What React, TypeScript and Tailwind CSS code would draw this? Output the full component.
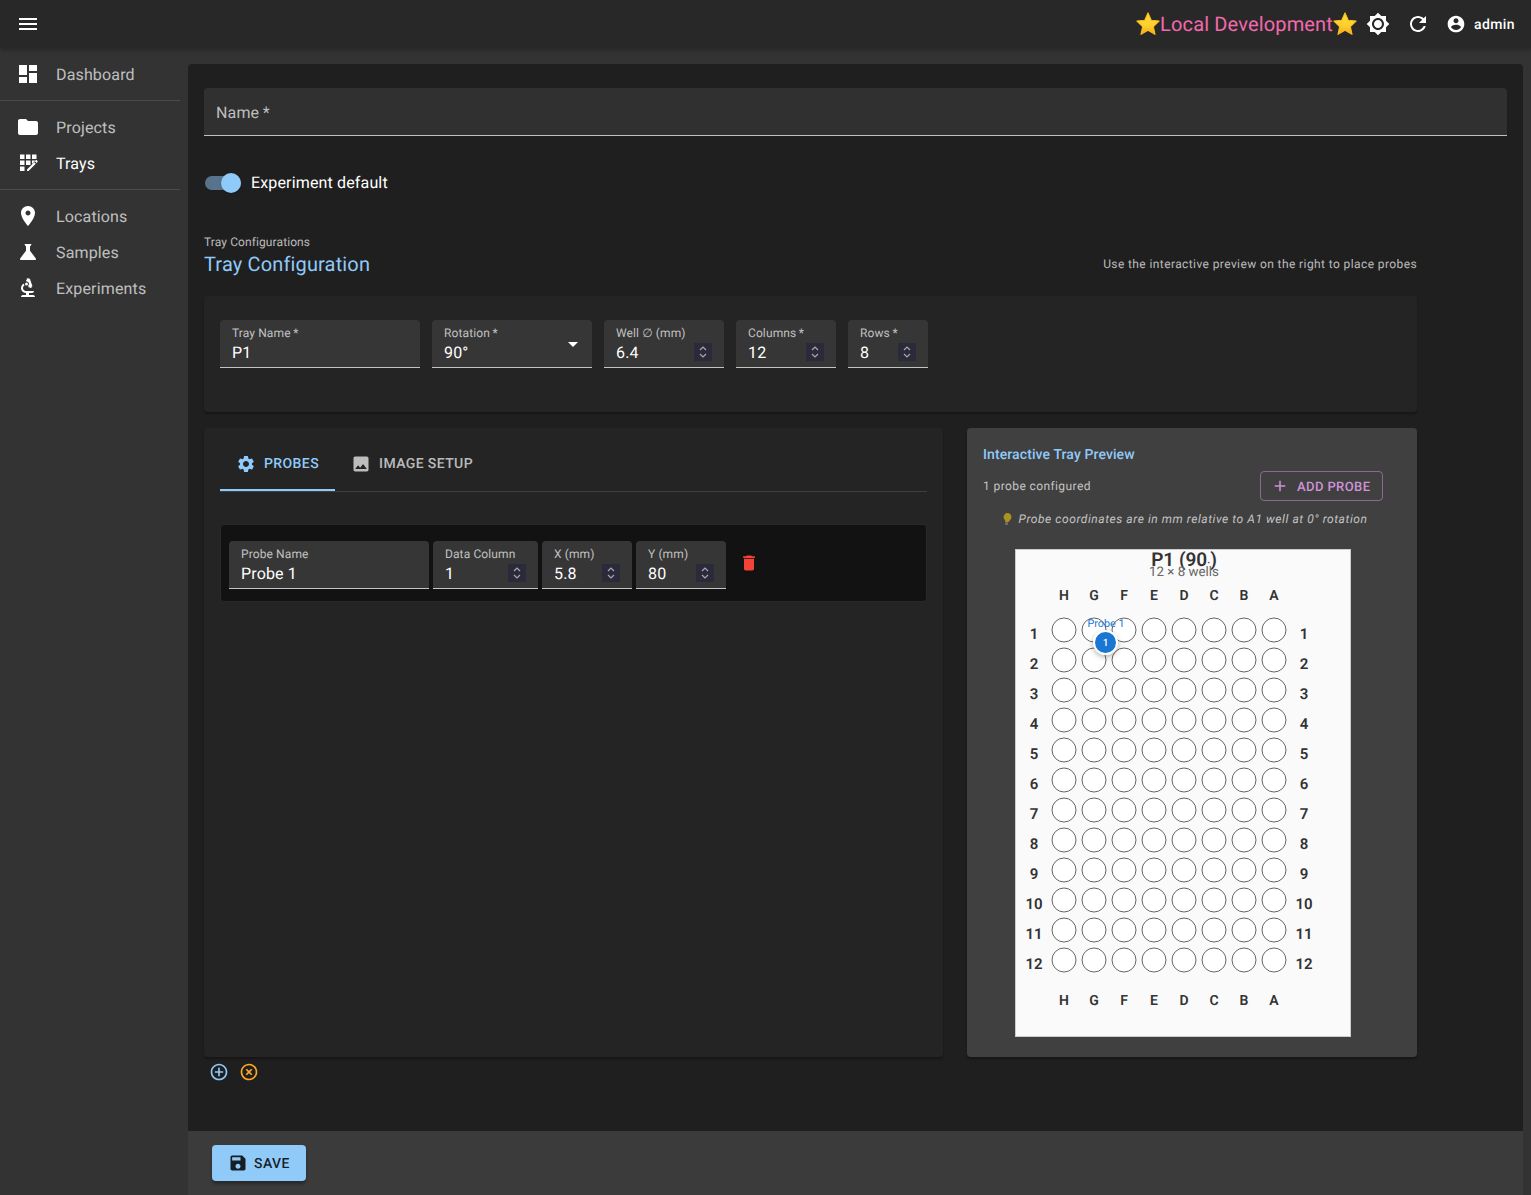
import React from "react";

const P = {
  menu: "M3 18h18v-2H3v2zm0-5h18v-2H3v2zm0-7v2h18V6H3z",
  dashboard: "M3 13h8V3H3v10zm0 8h8v-6H3v6zm10 0h8V11h-8v10zm0-18v6h8V3h-8z",
  folder: "M10 4H4c-1.1 0-1.99.9-1.99 2L2 18c0 1.1.9 2 2 2h16c1.1 0 2-.9 2-2V8c0-1.1-.9-2-2-2h-8l-2-2z",
  place: "M12 2C8.13 2 5 5.13 5 9c0 5.25 7 13 7 13s7-7.75 7-13c0-3.87-3.13-7-7-7zm0 9.5c-1.38 0-2.5-1.12-2.5-2.5s1.12-2.5 2.5-2.5 2.5 1.12 2.5 2.5-1.12 2.5-2.5 2.5z",
  science: "M19.8 18.4 14 10.67V6.5l1.35-1.69c.26-.33.03-.81-.39-.81H9.04c-.42 0-.65.48-.39.81L10 6.5v4.17L4.2 18.4c-.49.66-.02 1.6.8 1.6h14c.82 0 1.29-.94.8-1.6z",
  biotech: "M7 19c-1.1 0-2 .9-2 2h14c0-1.1-.9-2-2-2h-4v-2h3c1.1 0 2-.9 2-2h-8c-1.66 0-3-1.34-3-3 0-1.09.59-2.04 1.46-2.56C8.17 9.03 8 8.54 8 8c0-.21.04-.42.09-.62C6.28 8.13 5 9.92 5 12c0 2.76 2.24 5 5 5v2H7zM10.56 5.51C11.91 5.54 13 6.64 13 8c0 .75-.33 1.41-.85 1.87l.59 1.62.94-.34.34.94 1.88-.68-.34-.94.94-.34-2.74-7.52-.94.34-.34-.94-1.88.68.34.94-.94.35.56 1.53zM10.5 6.5a1.5 1.5 0 1 0 0 3 1.5 1.5 0 0 0 0-3z",
  trays: "M4 3.5h4.5V8H4zM10 3.5h4.5V8H10zM16 3.5h4.5V8H16zM4 9.5h4.5V14H4zM10 9.5h4.5V14H10zM16 9.5h3.5L16 13zM4 15.5h4.5V20H4zM11 18.5l7.3-7.3 1.5 1.5-7.3 7.3H11zM18.9 10.3l1-1c.3-.3.7-.3 1 0l.6.6c.3.3.3.7 0 1l-1 1z",
  brightness: "M20 8.69V4h-4.69L12 .69 8.69 4H4v4.69L.69 12 4 15.31V20h4.69L12 23.31 15.31 20H20v-4.69L23.31 12 20 8.69zM12 18c-3.31 0-6-2.69-6-6s2.69-6 6-6 6 2.69 6 6-2.69 6-6 6zm0-10c-2.21 0-4 1.79-4 4s1.79 4 4 4 4-1.79 4-4-1.79-4-4-4z",
  refresh: "M17.65 6.35C16.2 4.9 14.21 4 12 4c-4.42 0-7.99 3.58-7.99 8s3.57 8 7.99 8c3.73 0 6.84-2.55 7.73-6h-2.08c-.82 2.33-3.04 4-5.65 4-3.31 0-6-2.69-6-6s2.69-6 6-6c1.66 0 3.14.69 4.22 1.78L13 11h7V4l-2.35 2.35z",
  account: "M12 2C6.48 2 2 6.48 2 12s4.48 10 10 10 10-4.48 10-10S17.52 2 12 2zm0 3c1.66 0 3 1.34 3 3s-1.34 3-3 3-3-1.34-3-3 1.34-3 3-3zm0 14.2c-2.5 0-4.71-1.28-6-3.22.03-1.99 4-3.08 6-3.08 1.99 0 5.97 1.09 6 3.08-1.29 1.94-3.5 3.22-6 3.22z",
  settings: "M19.14 12.94c.04-.3.06-.61.06-.94 0-.32-.02-.64-.07-.94l2.03-1.58c.18-.14.23-.41.12-.61l-1.92-3.32c-.12-.22-.37-.29-.59-.22l-2.39.96c-.5-.38-1.03-.7-1.62-.94l-.36-2.54c-.04-.24-.24-.41-.48-.41h-3.84c-.24 0-.43.17-.47.41l-.36 2.54c-.59.24-1.13.57-1.62.94l-2.39-.96c-.22-.08-.47 0-.59.22L2.74 8.87c-.12.21-.08.47.12.61l2.03 1.58c-.05.3-.09.63-.09.94s.02.64.07.94l-2.03 1.58c-.18.14-.23.41-.12.61l1.92 3.32c.12.22.37.29.59.22l2.39-.96c.5.38 1.03.7 1.62.94l.36 2.54c.05.24.24.41.48.41h3.84c.24 0 .44-.17.47-.41l.36-2.54c.59-.24 1.13-.56 1.62-.94l2.39.96c.22.08.47 0 .59-.22l1.92-3.32c.12-.22.07-.47-.12-.61l-2.01-1.58zM12 15.6c-1.98 0-3.6-1.62-3.6-3.6s1.62-3.6 3.6-3.6 3.6 1.62 3.6 3.6-1.62 3.6-3.6 3.6z",
  image: "M21 19V5c0-1.1-.9-2-2-2H5c-1.1 0-2 .9-2 2v14c0 1.1.9 2 2 2h14c1.1 0 2-.9 2-2zM8.5 13.5l2.5 3.01L14.5 12l4.5 6H5l3.5-4.5z",
  del: "M6 19c0 1.1.9 2 2 2h8c1.1 0 2-.9 2-2V7H6v12zM19 4h-3.5l-1-1h-5l-1 1H5v2h14V4z",
  save: "M17 3H5c-1.11 0-2 .9-2 2v14c0 1.1.89 2 2 2h14c1.1 0 2-.9 2-2V7l-4-4zm-5 16c-1.66 0-3-1.34-3-3s1.34-3 3-3 3 1.34 3 3-1.34 3-3 3zm3-10H5V5h10v4z",
  addc: "M13 7h-2v4H7v2h4v4h2v-4h4v-2h-4V7zm-1-5C6.48 2 2 6.48 2 12s4.48 10 10 10 10-4.48 10-10S17.52 2 12 2zm0 18c-4.41 0-8-3.59-8-8s3.59-8 8-8 8 3.59 8 8-3.59 8-8 8z",
  off: "M14.59 8 12 10.59 9.41 8 8 9.41 10.59 12 8 14.59 9.41 16 12 13.41 14.59 16 16 14.59 13.41 12 16 9.41 14.59 8zM12 2C6.47 2 2 6.47 2 12s4.47 10 10 10 10-4.47 10-10S17.53 2 12 2zm0 18c-4.41 0-8-3.59-8-8s3.59-8 8-8 8 3.59 8 8-3.59 8-8 8z",
  add: "M19 13h-6v6h-2v-6H5v-2h6V5h2v6h6v2z",
};

function Icon({ d, className }: { d: string; className: string }) {
  return (
    <svg viewBox="0 0 24 24" fill="currentColor" fillRule="evenodd" className={className}>
      <path d={d} />
    </svg>
  );
}

function Star() {
  return (
    <svg viewBox="1 1 22 22" className="h-[24px] w-[24px] shrink-0">
      <defs>
        <linearGradient id="st" x1="0" y1="0" x2="0" y2="1">
          <stop offset="0" stopColor="#fdd835" />
          <stop offset="0.6" stopColor="#fdd02f" />
          <stop offset="1" stopColor="#f5a70f" />
        </linearGradient>
      </defs>
      <path d="M12 1.8l3 6.7 7.2.8-5.3 5 1.5 7.2-6.4-3.7-6.4 3.7 1.5-7.2-5.3-5 7.2-.8z" fill="url(#st)" strokeLinejoin="round" stroke="#f9bf20" strokeWidth="1" />
    </svg>
  );
}

function NavItem({ d, label, active }: { d: string; label: string; active?: boolean }) {
  return (
    <div className="flex h-9 items-center pl-4">
      <Icon d={d} className="h-6 w-6 text-white" />
      <span className={`ml-4 pt-[2px] text-[16px] tracking-[0.15px] ${active ? "text-white" : "text-white/70"}`}>{label}</span>
    </div>
  );
}

function Spin() {
  return (
    <svg viewBox="0 0 18 18" className="mb-[6px] h-[18px] w-[18px] shrink-0 self-end bg-[#2a2a3a]">
      <path d="M6 7l3-3 3 3M6 11l3 3 3-3" fill="none" stroke="#a8a8b0" strokeWidth="1.2" />
    </svg>
  );
}

function Field({ label, value, w, spin, select }: { label: string; value: string; w: string; spin?: boolean; select?: boolean }) {
  return (
    <div className={`relative flex h-12 shrink-0 items-end rounded-t border-b border-white/70 bg-[#363636] px-3 ${w}`}>
      <span className="absolute left-3 top-[6px] text-[12px] leading-[14px] tracking-[0.11px] text-white/70">{label}</span>
      <span className="mb-[3px] flex-1 text-[16px] leading-[23px] tracking-[0.15px] text-white">{value}</span>
      {spin ? <Spin /> : null}
      {select ? (
        <svg viewBox="0 0 24 24" className="absolute right-[7px] top-[12px] h-6 w-6 text-white" fill="currentColor">
          <path d="M7 10l5 5 5-5z" />
        </svg>
      ) : null}
    </div>
  );
}

function TrayPlate() {
  const cols = ["H", "G", "F", "E", "D", "C", "B", "A"];
  const rows = Array.from({ length: 12 }, (_, i) => i + 1);
  return (
    <svg width="336" height="488" viewBox="0 0 334 486" className="box-border block border border-[#cccccc] bg-[#fafafa]">
      <text x="168" y="16" textAnchor="middle" fontSize="19" fontWeight="600" fill="#333">P1 (90<tspan fontSize="10">·</tspan>)</text>
      <text x="168" y="26" textAnchor="middle" fontSize="13.3" fill="#666">12 × 8 wells</text>
      {cols.map((c, i) => (
        <g key={c}>
          <text x={48 + 30 * i} y="49.5" textAnchor="middle" fontSize="14" fontWeight="600" fill="#333">{c}</text>
          <text x={48 + 30 * i} y="455" textAnchor="middle" fontSize="14" fontWeight="600" fill="#333">{c}</text>
        </g>
      ))}
      {rows.map((r) => (
        <g key={r}>
          <text x="18" y={89 + 30 * (r - 1)} textAnchor="middle" fontSize="15" fontWeight="600" fill="#333">{r}</text>
          <text x="288" y={89 + 30 * (r - 1)} textAnchor="middle" fontSize="15" fontWeight="600" fill="#333">{r}</text>
          {cols.map((c, i) => (
            <circle key={c} cx={48 + 30 * i} cy={80 + 30 * (r - 1)} r="12" fill="#fff" stroke="#666" strokeWidth="1" />
          ))}
        </g>
      ))}
      <defs>
        <filter id="sh" x="-50%" y="-50%" width="200%" height="200%">
          <feDropShadow dx="0" dy="2" stdDeviation="2.5" floodOpacity="0.3" />
        </filter>
      </defs>
      <circle cx="89.5" cy="92.5" r="12.5" fill="#fff" filter="url(#sh)" />
      <circle cx="89.5" cy="92.5" r="10.5" fill="#1976d2" />
      <text x="89.5" y="96" textAnchor="middle" fontSize="10" fontWeight="500" fill="#fff">1</text>
      <text x="90" y="77" textAnchor="middle" fontSize="10.8" fill="#1976d2">Probe 1</text>
    </svg>
  );
}

export default function App() {
  return (
    <div className="flex h-[1195px] flex-col overflow-hidden bg-[#333333] text-white [text-rendering:geometricPrecision]" style={{ fontFamily: "Roboto, sans-serif" }}>
      <header className="z-10 flex h-12 shrink-0 items-center bg-[#282828] pl-4 pr-4 shadow-[0_2px_4px_rgba(0,0,0,0.25)]">
        <Icon d={P.menu} className="h-6 w-6 text-white" />
        <div className="flex-1" />
        <Star />
        <span className="text-[20px] leading-6 tracking-[0.15px] text-[#f468ae]">Local Development</span>
        <Star />
        <Icon d={P.brightness} className="ml-[9px] h-6 w-6 text-white" />
        <Icon d={P.refresh} className="ml-4 h-6 w-6 text-white" />
        <Icon d={P.account} className="ml-4 h-5 w-5 text-white" />
        <span className="ml-2 pt-[2px] text-[14px] font-medium tracking-[0.4px] text-white">admin</span>
      </header>
      <div className="flex min-h-0 flex-1">
        <nav className="w-[188px] shrink-0 pr-2 pt-2">
          <NavItem d={P.dashboard} label="Dashboard" />
          <div className="my-2 h-px bg-white/[0.12]" />
          <NavItem d={P.folder} label="Projects" />
          <NavItem d={P.trays} label="Trays" active />
          <div className="my-2 h-px bg-white/[0.12]" />
          <NavItem d={P.place} label="Locations" />
          <NavItem d={P.science} label="Samples" />
          <NavItem d={P.biotech} label="Experiments" />
        </nav>
        <div className="mr-2 mt-4 flex min-w-0 flex-1 flex-col">
          <main className="flex-1 rounded-t bg-[#1f1f1f] p-4 pt-6">
            <div className="relative h-12 rounded-t border-b border-white/70 bg-[#303030]">
              <span className="absolute left-3 top-[15px] text-[16px] leading-[20px] tracking-[0.15px] text-white/70">Name{"\u2009"}*</span>
            </div>
            <div className="mt-[33px] flex h-7 items-center">
              <div className="relative ml-[1px] h-[14px] w-[36px] rounded-full bg-[#90caf9]/50">
                <div className="absolute -top-[3px] right-0 h-5 w-5 rounded-full bg-[#90caf9] shadow" />
              </div>
              <span className="ml-[10px] text-[16px] tracking-[0.15px] text-white">Experiment default</span>
            </div>
            <div className="w-[1213px]">
              <div className="mt-[37px] text-[12px] leading-[16px] tracking-[0.1px] text-white/70">Tray Configurations</div>
              <div className="flex items-center justify-between">
                <span className="text-[20px] leading-[28px] tracking-[0.15px] text-[#90caf9]">Tray Configuration</span>
                <span className="text-[12px] tracking-[0.4px] text-white/70">Use the interactive preview on the right to place probes</span>
              </div>
              <section className="mt-[18px] h-[116px] rounded bg-[#242424] p-4 pt-6 shadow-[0_2px_2px_rgba(0,0,0,0.3)]">
                <div className="flex gap-3">
                  <Field label={"Tray Name\u2009*"} value="P1" w="w-[200px]" />
                  <Field label={"Rotation\u2009*"} value="90°" w="w-[160px]" select />
                  <Field label="Well ∅ (mm)" value="6.4" w="w-[120px]" spin />
                  <Field label={"Columns\u2009*"} value="12" w="w-[100px]" spin />
                  <Field label={"Rows\u2009*"} value="8" w="w-[80px]" spin />
                </div>
              </section>
              <div className="mt-4 flex gap-6">
                <section className="h-[629px] w-[739px] rounded bg-[#242424] px-4 shadow-[0_2px_2px_rgba(0,0,0,0.3)]">
                  <div className="flex h-[64px] items-end border-b border-white/[0.12]">
                    <div className="relative flex h-[56px] items-center px-4 pt-[2px] text-[14px] font-medium uppercase tracking-[0.4px] text-[#90caf9]">
                      <Icon d={P.settings} className="mr-2 h-5 w-5" />
                      Probes
                      <div className="absolute bottom-0 left-0 right-0 h-[2px] bg-[#90caf9]" />
                    </div>
                    <div className="flex h-[56px] items-center px-4 pt-[2px] text-[14px] font-medium uppercase tracking-[0.4px] text-white/70">
                      <Icon d={P.image} className="mr-2 h-5 w-5" />
                      Image Setup
                    </div>
                  </div>
                  <div className="mt-[32px] flex h-[78px] items-start gap-1 rounded border border-[#2a2a2a] bg-[#121212] px-2 pt-4">
                    <Field label="Probe Name" value="Probe 1" w="w-[200px]" />
                    <Field label="Data Column" value="1" w="w-[105px]" spin />
                    <Field label="X (mm)" value="5.8" w="w-[90px]" spin />
                    <Field label="Y (mm)" value="80" w="w-[90px]" spin />
                    <Icon d={P.del} className="ml-[9px] mt-3 h-5 w-5 text-[#f44336]" />
                  </div>
                </section>
                <section className="h-[629px] w-[450px] rounded bg-[#404040] px-4 pt-[17px] shadow-[0_2px_2px_rgba(0,0,0,0.3)]">
                  <div className="text-[14px] font-medium leading-[20px] tracking-[0.1px] text-[#90caf9]">Interactive Tray Preview</div>
                  <div className="mt-[6px] flex w-[400px] items-center justify-between">
                    <span className="text-[12px] tracking-[0.4px] text-white/70">1 probe configured</span>
                    <div className="flex h-[30px] w-[123px] items-center justify-start rounded border border-[#ce93d8]/50 pl-[10px] text-[13px] font-medium uppercase tracking-[0.4px] text-[#ce93d8]">
                      <Icon d={P.add} className="mr-[8px] h-[18px] w-[18px]" />
                      <span className="pt-[4px]">Add Probe</span>
                    </div>
                  </div>
                  <div className="mt-[10px] flex w-[400px] items-center justify-center pl-[2px] text-[12px] italic leading-[16px] tracking-[0.56px] text-white/70">
                    <svg viewBox="0 0 12 14" className="mr-[6px] h-[14px] w-[12px] opacity-60">
                      <path d="M7 1a4 4 0 0 1 2.5 6.5L7 10.5H4.5L4 8A4 4 0 0 1 7 1z" fill="#f9c80e" />
                      <path d="M4 11h3l-.5 2h-2z" fill="#8a9aa8" />
                    </svg>
                    Probe coordinates are in mm relative to A1 well at 0° rotation
                  </div>
                  <div className="ml-[32px] mt-[22px]">
                    <TrayPlate />
                  </div>
                </section>
              </div>
              <div className="mt-[5px] flex gap-[10px] pl-[5px]">
                <Icon d={P.addc} className="h-5 w-5 text-[#90caf9]" />
                <Icon d={P.off} className="h-5 w-5 text-[#ffa726]" />
              </div>
            </div>
          </main>
          <footer className="flex h-16 shrink-0 items-center bg-[#3b3b3b] pl-6">
            <div className="flex h-9 w-[94px] items-center rounded bg-[#90caf9] pl-4 text-[14px] font-medium uppercase tracking-[0.4px] text-black/85 shadow-[0_3px_3px_rgba(0,0,0,0.3)]">
              <Icon d={P.save} className="mr-[6px] h-5 w-5" />
              <span className="pt-[2px]">Save</span>
            </div>
          </footer>
        </div>
      </div>
    </div>
  );
}
